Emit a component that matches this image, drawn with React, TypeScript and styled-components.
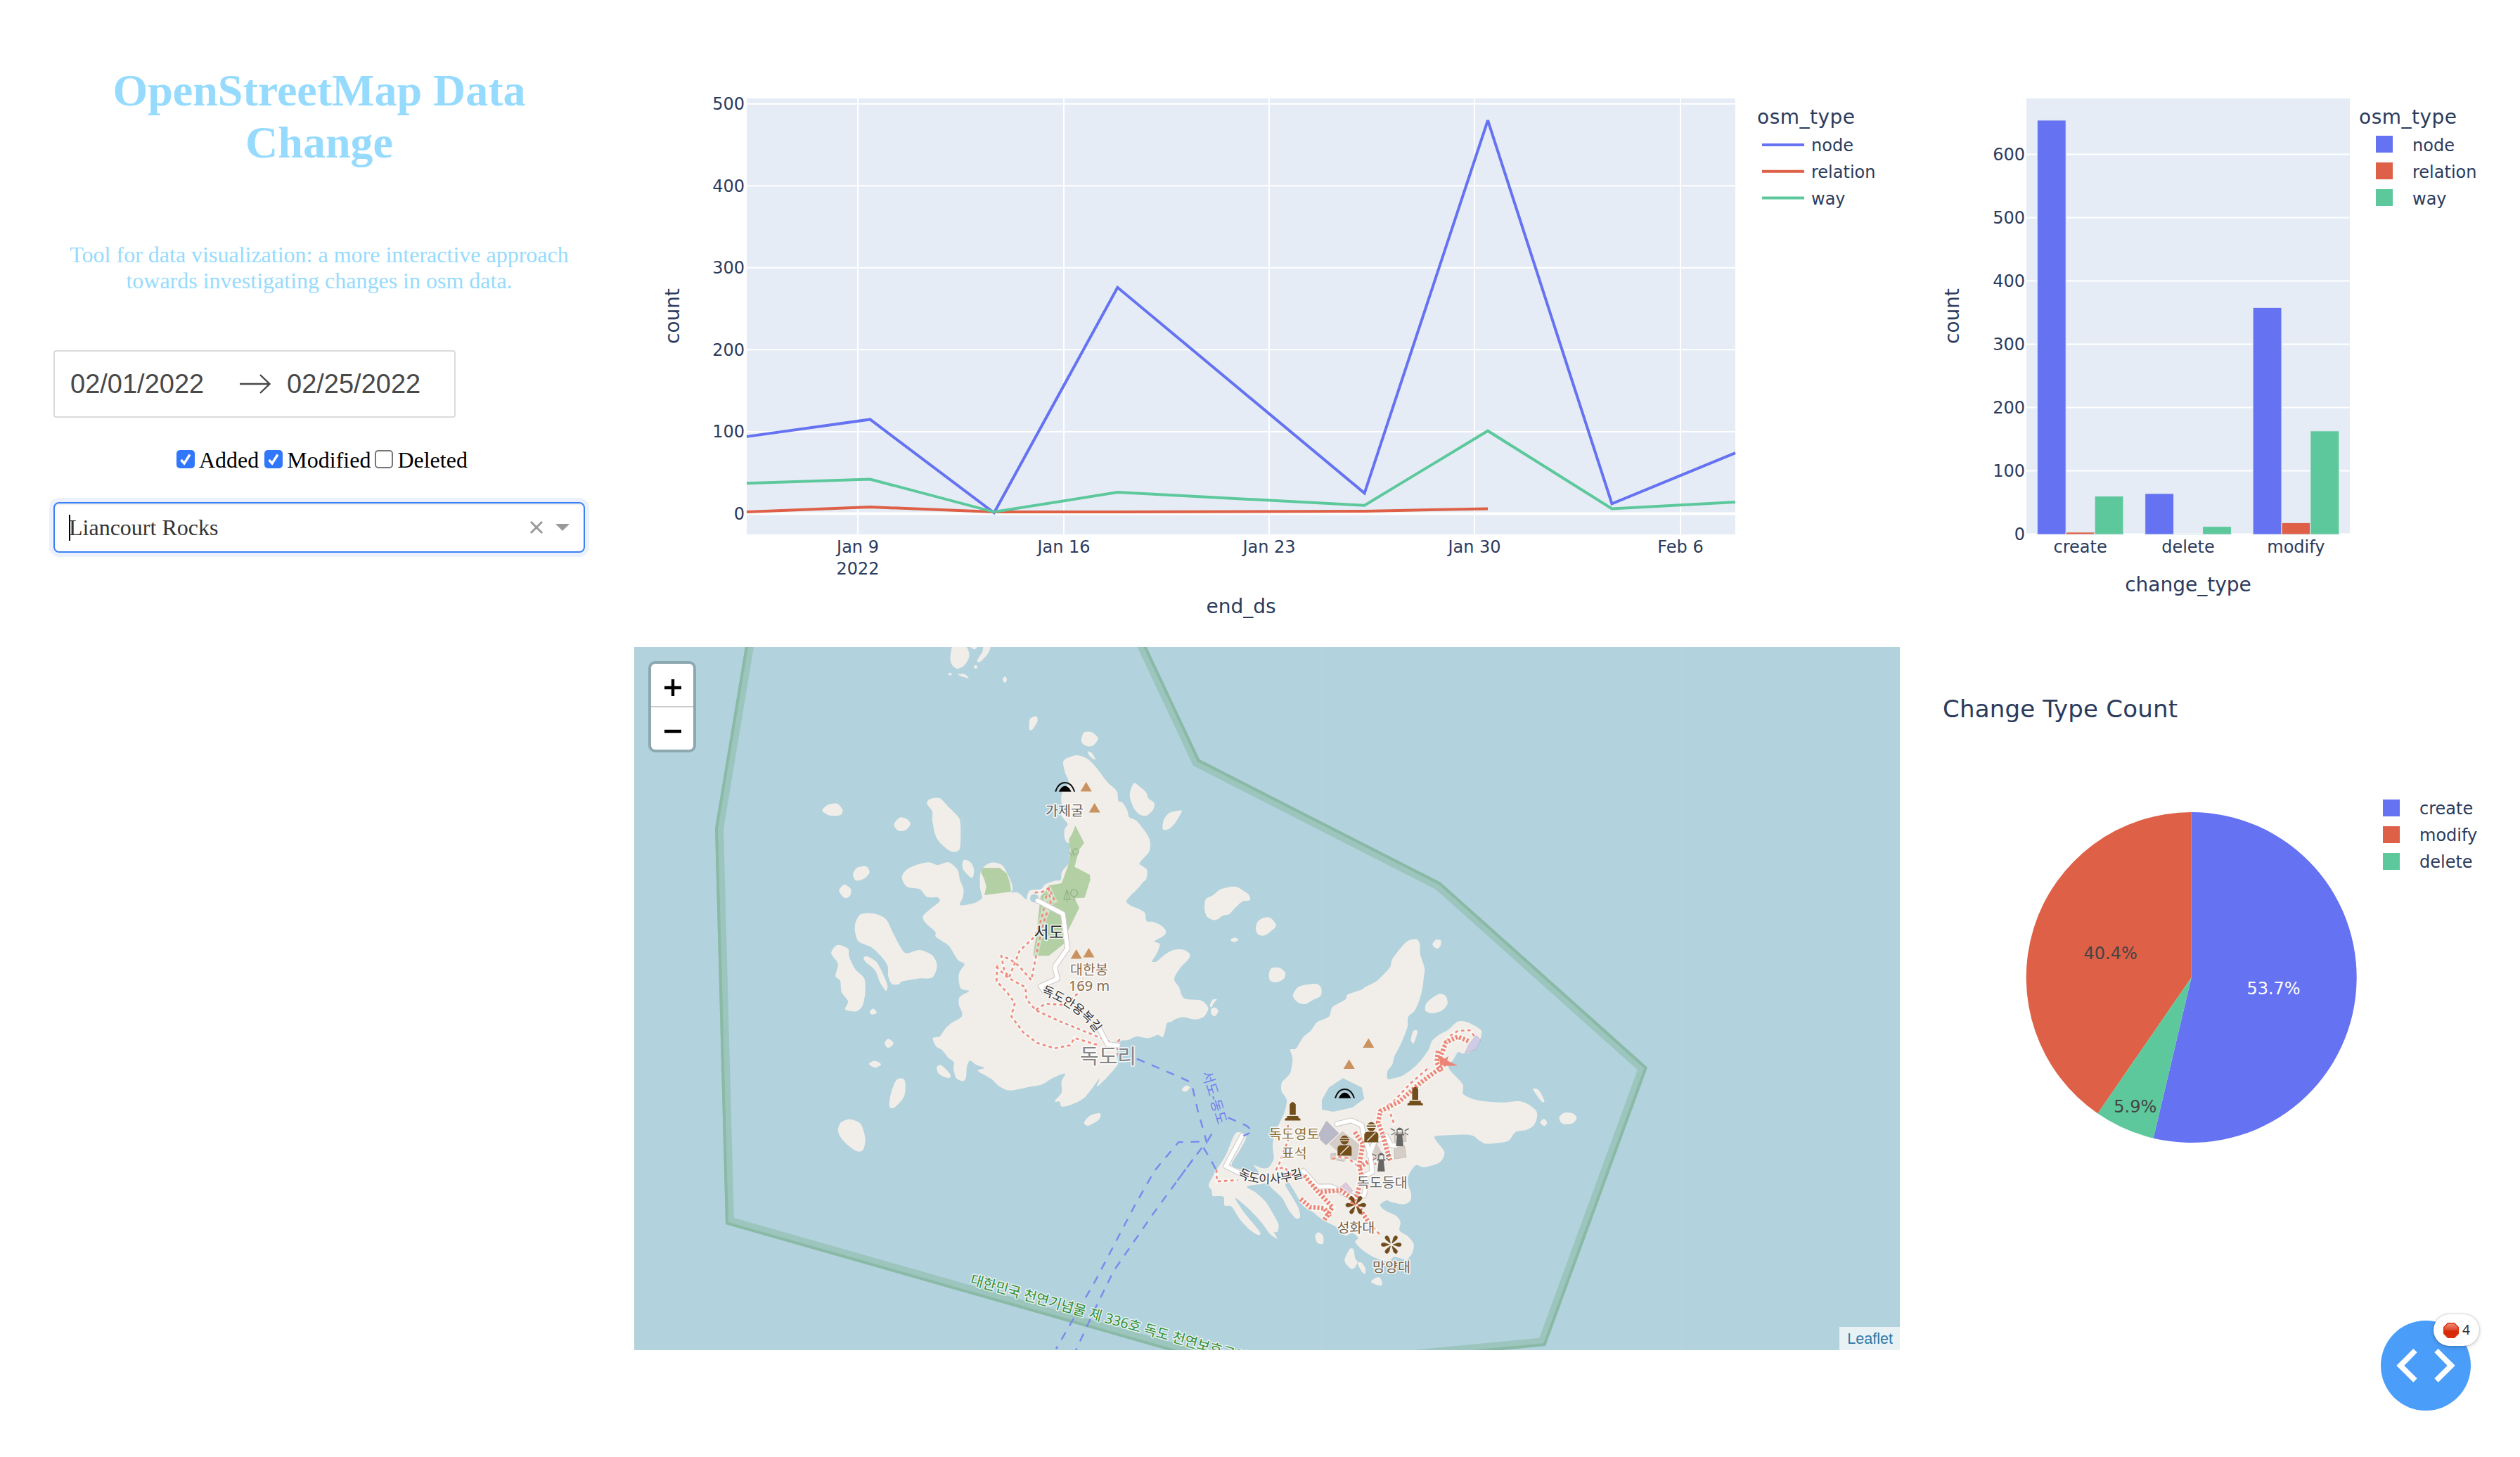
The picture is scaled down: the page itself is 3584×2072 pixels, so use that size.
import React from "react";
import styled, { createGlobalStyle } from "styled-components";

const BLUE = "#6572f1";
const RED = "#dd6047";
const GREEN = "#5cc89b";
const INK = "#2b3b5c";
const PLOT = "#e5ecf6";
const SANS = '"DejaVu Sans", Verdana, sans-serif';
const KOREAN = '"Noto Sans", "Noto Sans CJK KR", sans-serif';

const GlobalStyle = createGlobalStyle`
  body { margin: 0; background: #fff; }
`;

const Page = styled.main`
  display: grid;
  grid-template-columns: 902px 1800px 882px;
  grid-template-rows: 920px 1000px;
  width: 3584px;
  height: 2072px;
  overflow: hidden;
  font-family: "Liberation Serif", "Times New Roman", serif;
`;

const Sidebar = styled.aside`
  grid-row: 1 / span 2;
  box-sizing: border-box;
  padding: 92px 70px 0 76px;
  display: flex;
  flex-direction: column;
`;

const Title = styled.h1`
  margin: 0;
  font-size: 64px;
  line-height: 74px;
  font-weight: 700;
  text-align: center;
  color: #96dbfd;
`;

const Subtitle = styled.p`
  margin: 104px 0 0;
  font-size: 32px;
  line-height: 37px;
  text-align: center;
  color: #96dbfd;
`;

const DateRange = styled.div`
  box-sizing: border-box;
  margin-top: 80px;
  width: 572px;
  height: 96px;
  border: 2px solid #dbdbdb;
  border-radius: 4px;
  display: flex;
  align-items: center;
  padding-left: 22px;
`;

const DateText = styled.span<{ $width: number }>`
  width: ${(p) => p.$width}px;
  font-family: "Liberation Sans", Arial, sans-serif;
  font-size: 38px;
  line-height: 44px;
  color: #484848;
`;

const DateArrow = styled.svg`
  width: 46px;
  height: 30px;
  margin-right: 22px;
`;

const Checks = styled.div`
  display: flex;
  align-items: flex-start;
  margin-top: 42px;
  padding-left: 175px;
  height: 37px;
`;

const CheckItem = styled.label<{ $gap: number }>`
  display: flex;
  align-items: flex-start;
  gap: 6px;
  margin-right: ${(p) => p.$gap}px;
  font-size: 32px;
  line-height: 37px;
  color: #000;
`;

const Box = styled.span<{ $on: boolean }>`
  box-sizing: border-box;
  width: 26px;
  height: 26px;
  margin-top: 4px;
  border-radius: 5px;
  border: 2px solid ${(p) => (p.$on ? "#3177fb" : "#767676")};
  background: ${(p) => (p.$on ? "#3177fb" : "#fff")};
  display: flex;
`;

const Select = styled.div`
  box-sizing: border-box;
  margin-top: 41px;
  height: 72px;
  border: 2px solid #3a80f4;
  border-radius: 8px;
  box-shadow: inset 0 2px 2px rgba(0, 0, 0, 0.075), 0 0 0 6px rgba(58, 128, 244, 0.1);
  display: flex;
  align-items: center;
  padding: 0 20px;
`;

const Caret = styled.span`
  width: 2px;
  height: 37px;
  background: #000;
  margin-right: -2px;
`;

const SelectValue = styled.span`
  flex: 1;
  font-size: 32px;
  line-height: 37px;
  color: #333;
`;

const SelectIcons = styled.svg`
  width: 58px;
  height: 20px;
`;

const ChartSvg = styled.svg`
  display: block;
  width: 100%;
  height: 100%;
  font-family: ${SANS};
  fill: ${INK};
`;

const MapFrame = styled.section`
  position: relative;
  overflow: hidden;
  background: #b2d2dd;
`;

const MapSvg = styled.svg`
  display: block;
  width: 1800px;
  height: 1000px;
  font-family: ${KOREAN};
`;

const ZoomControl = styled.div`
  position: absolute;
  left: 20px;
  top: 20px;
  border: 4px solid rgba(0, 0, 0, 0.2);
  border-radius: 10px;
  background-clip: padding-box;
  overflow: hidden;
`;

const ZoomButton = styled.button<{ $divider?: boolean }>`
  display: flex;
  align-items: center;
  justify-content: center;
  box-sizing: border-box;
  width: 60px;
  height: ${(p) => (p.$divider ? 62 : 60)}px;
  padding: 8px 0 0 2px;
  border: 0;
  border-bottom: ${(p) => (p.$divider ? "2px solid #ccc" : "0")};
  background: #fff;
`;

const Attribution = styled.div`
  position: absolute;
  right: 0;
  bottom: 0;
  height: 33px;
  padding: 0 10px 0 11px;
  background: rgba(255, 255, 255, 0.7);
  font: 21.6px/33px "Liberation Sans", Arial, sans-serif;
  color: #2f77a6;
`;

const DebugButton = styled.div`
  position: absolute;
  left: 3386px;
  top: 1878px;
  width: 128px;
  height: 128px;
  border-radius: 50%;
  background: #4a9df9;
`;

const Badge = styled.div`
  position: absolute;
  left: 75px;
  top: -9px;
  width: 65px;
  height: 45px;
  border-radius: 23px;
  background: #fff;
  box-shadow: 0 0 3px rgba(0, 0, 0, 0.25), 0 2px 6px rgba(0, 0, 0, 0.16);
  display: flex;
  align-items: center;
  gap: 5px;
  padding-left: 14px;
  box-sizing: border-box;
  font: 19px/45px "Noto Sans", sans-serif;
  color: #333;
`;

/* ---------- charts ---------- */

const lineX = [1062, 1237.5, 1413.8, 1589.4, 1940.6, 2116, 2292.5, 2468];
const series = [
  { name: "node", color: BLUE, values: [94, 115, 1, 276, 25, 480, 12, 74] },
  { name: "relation", color: RED, values: [2, 8, 2, 2, 3, 6] },
  { name: "way", color: GREEN, values: [37, 42, 2, 26, 10, 101, 6, 14] },
];
const lineY = (v: number) => 730.4 - v * 1.1652;

const weeks = [
  { label: "Jan 9", x: 1220 },
  { label: "Jan 16", x: 1513 },
  { label: "Jan 23", x: 1805 },
  { label: "Jan 30", x: 2097 },
  { label: "Feb 6", x: 2390 },
];

function LineChart() {
  return (
    <ChartSvg viewBox="902 0 1800 920">
      <rect x={1062} y={140} width={1406} height={620} fill={PLOT} />
      {weeks.map((w) => (
        <line key={w.label} x1={w.x} x2={w.x} y1={140} y2={760} stroke="#fff" strokeWidth={2} />
      ))}
      {[0, 100, 200, 300, 400, 500].map((v) => (
        <g key={v}>
          <line x1={1062} x2={2468} y1={lineY(v)} y2={lineY(v)} stroke="#fff" strokeWidth={v ? 2 : 4} />
          <text x={1059} y={lineY(v) + 8.5} fontSize={24} textAnchor="end">{v}</text>
        </g>
      ))}
      {series.map((s) => (
        <polyline
          key={s.name}
          points={s.values.map((v, i) => `${lineX[i]},${lineY(v)}`).join(" ")}
          fill="none"
          stroke={s.color}
          strokeWidth={4}
          strokeMiterlimit={2}
        />
      ))}
      {weeks.map((w) => (
        <text key={w.label} x={w.x} y={786} fontSize={24} textAnchor="middle">{w.label}</text>
      ))}
      <text x={1220} y={816.5} fontSize={24} textAnchor="middle">2022</text>
      <text x={1765} y={872} fontSize={28} textAnchor="middle">end_ds</text>
      <text transform="translate(966 449.5) rotate(-90)" fontSize={28} textAnchor="middle">count</text>
      <text x={2499} y={176} fontSize={28} textLength={139}>osm_type</text>
      {series.map((s, i) => (
        <g key={s.name}>
          <line x1={2506} x2={2566} y1={206 + i * 37.7} y2={206 + i * 37.7} stroke={s.color} strokeWidth={4} />
          <text x={2576} y={214.5 + i * 38} fontSize={24}>{s.name}</text>
        </g>
      ))}
    </ChartSvg>
  );
}

const groups = [
  { name: "create", values: [654, 3, 60] },
  { name: "delete", values: [64, 0, 12] },
  { name: "modify", values: [358, 18, 163] },
];

function BarChart() {
  const y = (v: number) => 759.5 - v * 0.9;
  return (
    <ChartSvg viewBox="2702 0 882 920">
      <rect x={2882} y={140} width={460} height={620} fill={PLOT} />
      {[0, 100, 200, 300, 400, 500, 600].map((v) => (
        <g key={v}>
          <line x1={2882} x2={3342} y1={y(v)} y2={y(v)} stroke="#fff" strokeWidth={2} />
          <text x={2880} y={y(v) + 8.5} fontSize={24} textAnchor="end">{v}</text>
        </g>
      ))}
      {groups.map((g, i) =>
        g.values.map((v, j) => (
          <rect
            key={g.name + j}
            x={2897.3 + i * 153.4 + j * 40.9}
            y={y(v)}
            width={40.9}
            height={v * 0.9 + 0.5}
            fill={series[j].color}
            stroke={PLOT}
            strokeWidth={1}
          />
        ))
      )}
      {groups.map((g, i) => (
        <text key={g.name} x={2958.6 + i * 153.4} y={786} fontSize={24} textAnchor="middle">{g.name}</text>
      ))}
      <text x={3112} y={841} fontSize={28} textAnchor="middle">change_type</text>
      <text transform="translate(2786 449.5) rotate(-90)" fontSize={28} textAnchor="middle">count</text>
      <text x={3355} y={176} fontSize={28} textLength={139}>osm_type</text>
      {series.map((s, i) => (
        <g key={s.name}>
          <rect x={3379} y={193 + i * 38} width={24} height={24} fill={s.color} />
          <text x={3431} y={214.5 + i * 38} fontSize={24}>{s.name}</text>
        </g>
      ))}
    </ChartSvg>
  );
}

const slices = [
  { name: "create", share: 53.7, color: BLUE, from: 0, tx: 3233.5, ty: 1413.5, ink: "#fff" },
  { name: "modify", share: 40.4, color: RED, from: 59.6, tx: 3001.6, ty: 1364, ink: "#444" },
  { name: "delete", share: 5.9, color: GREEN, from: 53.7, tx: 3036.8, ty: 1581.5, ink: "#444" },
];

function PieChart() {
  const at = (pct: number) => {
    const a = (pct / 100) * Math.PI * 2;
    return `${3116.7 + 235 * Math.sin(a)},${1390 - 235 * Math.cos(a)}`;
  };
  return (
    <ChartSvg viewBox="2702 920 882 1000">
      <text x={2763} y={1020} fontSize={34} textLength={334}>Change Type Count</text>
      {slices.map((s, i) => (
        <g key={s.name}>
          <path
            d={`M3116.7,1390 L${at(s.from)} A235,235 0 ${s.share > 50 ? 1 : 0} 1 ${at(s.from + s.share)} Z`}
            fill={s.color}
          />
          <rect x={3389} y={1137 + i * 38} width={24} height={24} fill={s.color} />
          <text x={3441} y={1158 + i * 38} fontSize={24}>{s.name}</text>
        </g>
      ))}
      {slices.map((s) => (
        <text key={s.name} x={s.tx} y={s.ty} fontSize={24} textAnchor="middle" fill={s.ink}>{s.share}%</text>
      ))}
    </ChartSvg>
  );
}

/* ---------- map ---------- */

// Survey sheets: each has its own origin and its own units per map pixel.
const sheets: Record<string, [number, number, number, number]> = {
  A: [900, 910, 1.96, 1.5373],
  B: [1300, 1020, 3, 2.9037],
  C: [1660, 1300, 3, 2.8],
  D: [2100, 910, 2.529, 1.5373],
  E: [1700, 1500, 3, 3],
  M: [0, 0, 1, 1],
};

function project(src: string): [number, number][] {
  let sheet = sheets.M;
  const out: [number, number][] = [];
  src.trim().split(/\s+/).forEach((token) => {
    if (sheets[token]) {
      sheet = sheets[token];
      return;
    }
    const [x, y] = token.split(",").map(Number);
    out.push([sheet[0] + x / sheet[2], sheet[1] + y / sheet[3]]);
  });
  return out;
}

const straight = (src: string) => "M" + project(src).map((p) => p.map((n) => n.toFixed(1)).join(",")).join(" L");

function coast(src: string) {
  const p = project(src);
  const n = p.length;
  const t = 7;
  let d = `M${p[0].join(",")}`;
  for (let i = 0; i < n; i++) {
    const a = p[(i + n - 1) % n];
    const b = p[i];
    const c = p[(i + 1) % n];
    const e = p[(i + 2) % n];
    d += ` C${b[0] + (c[0] - a[0]) / t},${b[1] + (c[1] - a[1]) / t} ${c[0] - (e[0] - b[0]) / t},${c[1] - (e[1] - b[1]) / t} ${c[0]},${c[1]}`;
  }
  return d + "Z";
}

const land = [
  "B 636,185 655,168 695,157 740,172 775,205 825,268 865,305 872,345 890,353 910,385 918,412 950,428 985,470 1005,505 1008,535 1000,560 962,602 975,615 995,632 990,670 978,680 950,712 925,735 906,760 925,778 960,792 985,808 992,842 1020,845 1055,860 1075,883 1065,902 1025,925 1047,935 1045,955 1030,985 1015,1008 1035,1008 1070,980 1110,960 1150,960 C 97,160 90,180 55,215 30,258 50,290 72,335 140,342 165,358 175,378 160,405 135,417 110,418 65,410 30,420 20,428 0,433 B 1075,1275 1070,1300 1060,1322 1040,1312 1000,1325 950,1318 915,1332 885,1335 860,1340 870,1420 865,1440 820,1490 780,1525 A 1300,960 1260,1000 1222,1016 1195,1020 1190,1010 1176,1008 1195,990 1195,965 1205,948 1170,958 1140,972 1100,978 1050,985 1020,975 1000,960 962,942 B 300,1448 265,1435 238,1418 225,1445 222,1485 210,1502 180,1490 168,1450 170,1425 145,1405 120,1375 95,1360 80,1325 110,1318 130,1290 160,1262 200,1240 205,1220 192,1190 192,1160 210,1145 235,1130 200,1120 190,1080 195,1050 215,1020 190,1005 175,985 150,945 120,925 92,905 90,885 50,850 38,822 A 830,588 855,572 850,563 820,562 800,545 765,540 750,520 762,503 790,492 825,486 850,492 880,486 905,502 912,525 922,545 920,562 913,580 B 255,768 275,758 290,745 281,700 282,650 295,620 330,600 375,610 400,650 418,690 420,712 415,724 445,725 478,752 483,735 495,715 540,710 560,690 600,675 625,672 630,640 645,620 665,595 665,545 680,530 650,515 641,490 643,460 655,440 628,405 632,370 628,345 632,310 660,270 645,230",
  "C 1065,100 1078,120 1080,160 1098,215 1095,250 1088,300 1075,345 1055,385 1028,410 1025,450 1005,500 985,540 970,565 960,600 940,625 940,655 960,655 1000,645 1040,620 1080,585 1115,540 1130,505 1160,480 1200,460 1240,428 1280,430 1330,455 1342,470 1335,500 1320,530 1290,550 1260,555 1240,550 1220,580 1200,600 1205,620 1230,645 1262,680 1262,715 1300,735 1350,745 1430,750 1500,745 D 185,1015 215,1030 217,1045 205,1062 180,1071 140,1076 115,1095 75,1100 30,1101 0,1090 C 1310,885 1280,878 1200,880 1142,885 1150,905 1182,945 1175,975 1150,995 1095,1008 1060,1000 1030,1040 1028,1075 1040,1110 1038,1140 1010,1155 960,1148 935,1140 908,1158 930,1180 975,1200 995,1225 992,1260 1030,1285 1052,1315 1045,1350 1020,1375 970,1365 950,1380 920,1380 870,1360 830,1335 802,1305 815,1290 790,1270 760,1280 740,1255 700,1235 660,1215 620,1185 580,1160 540,1100 515,1065 505,1080 530,1120 560,1170 567,1205 550,1212 520,1180 490,1130 450,1095 430,1075 400,1075 340,1085 380,1110 420,1145 450,1190 475,1235 470,1265 455,1265 470,1292 440,1275 400,1225 350,1175 290,1130 330,1190 370,1235 398,1270 385,1277 350,1255 310,1215 275,1165 245,1160 240,1125 195,1122 190,1100 177,1078 200,1035 250,960 292,872 337,885 310,940 275,1000 330,1020 390,1030 370,1000 400,1010 430,1010 450,985 455,965 450,920 460,870 480,830 500,790 510,740 488,705 490,670 525,632 535,575 525,540 550,535 580,490 612,465 640,430 690,408 705,370 760,340 770,320 830,300 845,290 895,265 950,212 960,180 1000,130 1030,105",
  "A 528,373 545,360 570,358 585,372 578,383 550,384",
  "A 728,403 745,388 765,392 774,403 760,416 740,417",
  "A 820,358 828,348 855,346 880,365 905,385 913,400 912,455 890,463 865,450 845,430 835,395 835,375",
  "B 208,625 212,590 240,598 255,625 253,655 242,662",
  "A 614,512 625,498 650,495 660,508 645,522 622,526",
  "A 575,548 590,535 608,545 605,560 590,564",
  "A 620,620 635,600 670,598 705,610 725,640 745,670 762,685 800,678 835,690 848,712 835,738 800,740 750,747 742,753 722,752 712,735 710,712 690,690 665,672 630,660 620,640",
  "A 643,695 655,692 680,705 700,735 710,757 705,767 690,750 675,722 650,705",
  "A 553,685 570,667 600,675 603,692 620,720 645,740 648,770 640,800 622,812 592,808 600,790 582,770 578,745 565,735 572,708",
  "A 660,814 670,806 680,815 668,819",
  "A 702,882 712,872 727,882 712,892",
  "A 658,927 675,920 692,928 675,935",
  "A 715,1020 720,990 735,962 755,960 760,975 755,1000 730,1022",
  "A 572,1072 580,1055 605,1048 635,1058 648,1090 642,1115 625,1118 600,1105 580,1088",
  "A 847,935 860,930 885,950 880,958 855,950",
  "A 1258,1055 1275,1040 1302,1035 1300,1048 1270,1062",
  "C 62,700 80,683 97,690 80,707",
  "A 885,40 890,15 905,5 930,15 938,35 925,55 905,63 890,55",
  "A 935,8 962,8 955,20 945,18",
  "A 960,45 975,25 978,8 997,12 990,30 968,48",
  "A 950,59 956,55 961,59 956,63",
  "A 879,75 884,72 890,75 884,78",
  "A 905,75 925,75 936,84 918,80",
  "A 1031,87 1037,80 1043,87 1037,94",
  "A 1105,185 1108,172 1125,167 1128,178 1115,195 1106,197",
  "A 1250,218 1258,202 1280,202 1297,215 1285,230 1270,233 1255,228",
  "A 1268,244 1280,248 1290,262 1275,255",
  "B 920,320 938,272 965,288 990,310 1000,335 1025,355 1018,385 990,407 960,400 935,370",
  "B 1062,463 1065,425 1090,395 1140,385 1138,398 1115,435 1090,460",
  "C 159,-25 165,-60 195,-75 230,-100 290,-110 330,-90 350,-75 352,-55 320,-50 290,-25 265,0 240,5 205,24 170,10",
  "C 378,60 385,32 410,15 440,15 465,45 440,70 415,85 390,82",
  "C 270,103 288,94 304,102 285,111",
  "C 434,240 445,215 480,214 503,232 500,255 470,271 440,265",
  "C 537,320 560,290 600,280 640,278 657,295 655,325 620,343 590,358 565,355 545,340",
  "C 1132,122 1145,103 1168,105 1165,128 1150,137",
  "C 1100,375 1110,350 1160,318 1190,328 1195,360 1170,385 1130,395 1105,388",
  "C 183,360 195,340 212,340 200,352 188,372",
  "C 187,380 203,372 218,385 205,406 190,400",
  "C 1040,500 1050,465 1068,465 1062,490 1050,515",
  "C 632,1280 645,1267 665,1280 665,1312 640,1308",
  "C 757,1375 778,1335 795,1335 802,1370 812,1385 800,1408 785,1412 765,1395",
  "C 812,1390 830,1388 845,1410 845,1432 832,1425",
  "C 870,1462 900,1445 915,1460 915,1478 890,1475",
  "D 203,982 225,985 244,1008 232,1008",
  "D 229,1055 242,1047 254,1055 244,1063",
  "D 297,1045 315,1034 345,1035 360,1045 345,1057 310,1058",
];

const woods = [
  "B 286,640 290,622 365,622 395,645 408,680 415,720 300,735 308,700 300,670",
  "B 688,447 726,520 705,545 685,618 750,650 752,670 728,745 685,748 705,787 655,885 640,935 575,985 508,985 520,905 540,740 575,695 630,685 665,590 668,545 660,505 675,480",
];

const buildings: [string, string][] = [
  ["E 560,283 612,335 558,385 520,350", "#bab9ca"],
  ["E 628,328 700,385 690,450 640,440 573,380", "#d6cdc7"],
  ["E 578,422 600,420 600,440 640,445 635,455 578,445", "#d6cdc7"],
  ["E 848,395 893,390 900,437 850,445", "#d6cdc7"],
  ["E 848,330 897,330 900,370 850,372", "#d6cdc7"],
  ["E 770,375 795,420 780,450 755,420", "#d6cdc7"],
  ["E 643,545 672,580 655,597 612,570", "#dccbdc"],
  ["C 1318,483 1338,500 1315,540 1270,553 1290,515", "#cfcbe8"],
];

const footpaths = [
  "B 515,724 545,722 575,705 605,768",
  "B 575,705 583,770 558,830 530,940 500,1085 445,1025 410,1000 372,985 385,1045 405,1075 432,1010 450,965 515,905 545,830 565,735",
  "B 355,1025 352,1090 400,1140 430,1180 415,1235 465,1300 525,1345 600,1367 665,1355 685,1325 780,1352",
  "B 350,1030 400,1075 475,1115 480,1165 520,1210 620,1255 780,1318 850,1345",
  "B 520,1208 560,1183 640,1188 700,1140 722,1080",
  "B 825,1340 862,1352 880,1325",
  "B 868,1360 868,1395",
  "E 990,60 920,120 850,195 820,215 850,300",
  "E 395,300 395,365 360,460 345,490 380,480 415,520",
  "E 585,445 610,435 650,440 700,480",
  "C 1310,485 1290,462 1240,465 1200,490 1160,560",
  "E 90,490 92,540 180,535",
  "E 750,410 770,470",
  "E 740,715 785,765",
];

const steps = [
  "C 1285,505 1240,488 1190,510 1165,570 1180,600 E 1020,75 960,120 870,200 790,240 780,290 800,340 815,400 832,450",
  "C 1155,545 1150,590 1170,625",
  "E 680,330 715,380 700,470 710,520 690,600 665,640",
  "E 700,480 740,455",
  "E 465,515 520,580 585,650 550,705",
  "E 450,615 490,650 550,655 575,690",
  "E 535,585 620,578 650,600 690,640 740,715",
];

const roads = [
  "B 527,757 635,812 655,955 600,1030 612,1080 540,1110 555,1130",
  "B 790,1285 825,1350 870,1355",
  "E 200,345 130,475 200,510",
  "E 460,495 520,562 580,562 640,595 685,608 720,600 730,555 725,515 755,500 748,430 738,400 720,350 710,300 665,280 605,295",
  "E 742,430 765,370 815,348 835,385 855,388",
];

const ferries = [
  "B 950,1410 1060,1455 1170,1502 C 108,690 130,780 150,845 170,915",
  "C 260,810 340,843 365,866 325,883",
  "C 190,875 165,915",
  "C 137,906 50,908 A 1520,1099 1455,1160 1400,1235 1290,1400 1180,1550",
  "C 148,930 40,1065 A 1560,1137 1450,1255 1340,1380 1290,1460 1235,1553",
  "C 155,930 190,985 210,1020",
];

const reserve = "M 1064,895 1017,1178 1032,1741 1369,1837 1780,1954 2198,1914 2343,1518 2049,1255 1706,1080 1619,895";

const Label = ({ x, y, size, color, children }: { x: number; y: number; size: number; color: string; children: React.ReactNode }) => (
  <text x={x} y={y} fontSize={size} textAnchor="middle" fill={color} stroke="rgba(255,255,255,0.75)" strokeWidth={3.5} paintOrder="stroke" strokeLinejoin="round">
    {children}
  </text>
);

const peaks = [[1544.7, 1119], [1556.7, 1149], [1530.7, 1357], [1548.5, 1355], [1946.3, 1483.6], [1918.7, 1513.5]];

function IslandMap() {
  return (
    <MapFrame>
      <MapSvg viewBox="902 920 1800 1000">
        <defs>
          <clipPath id="reserve"><path d={straight(reserve) + "Z"} /></clipPath>
          <path id="west-road" d="M1481,1413 C1508,1424 1538,1440 1559,1470" />
          <path id="east-road" d="M1760,1672 C1785,1690 1830,1683 1860,1671" />
          <path id="reserve-name" d="M1379,1826 L1660,1906 L1860,1963" />
        </defs>
        {[1368.4, 1880, 2392].map((x) => (
          <line key={x} x1={x} x2={x} y1={920} y2={1920} stroke="#bad6df" strokeWidth={1} />
        ))}
        {land.map((s, i) => <path key={i} d={coast(s)} fill="#f1eee9" />)}
        <path d={straight("C 660,740 690,690 750,653 830,690 841,735 790,770 708,787 660,778") + "Z"} fill="#b2d2dd" />
        <circle cx={1471} cy={1277.5} r={6} fill="#b2d2dd" />
        {woods.map((s) => <path key={s} d={straight(s) + "Z"} fill="#b3cfa4" />)}
        <g fill="none" stroke="#95b58b" strokeWidth={1.3}>
          <path d="M1517.5,1283 V1265 L1513,1279 H1522 L1517.5,1265" />
          <path d="M1527.5,1281 V1275" />
          <circle cx={1527.5} cy={1270} r={5} />
          <path d="M1524,1208 l4,10 M1521,1212 l4,6" />
          <circle cx={1530} cy={1211} r={4} />
        </g>
        <g clipPath="url(#reserve)" fill="none" strokeLinejoin="miter">
          <path d={straight(reserve) + "Z"} stroke="#9cc5bd" strokeWidth={24} />
          <path d={straight(reserve) + "Z"} stroke="#8ab9a6" strokeWidth={8} />
        </g>
        {buildings.map(([s, c]) => <path key={s} d={straight(s) + "Z"} fill={c} stroke="rgba(120,100,90,0.22)" />)}
        <g fill="none" strokeLinejoin="round">
          {footpaths.map((s) => <path key={s} d={straight(s)} stroke="rgba(255,255,255,0.4)" strokeWidth={6} />)}
          {footpaths.map((s) => <path key={s} d={straight(s)} stroke="#ee8a7d" strokeWidth={2.6} strokeDasharray="4.5 4.5" />)}
          {steps.map((s) => <path key={s} d={straight(s)} stroke="rgba(255,255,255,0.5)" strokeWidth={10} />)}
          {roads.map((s) => <path key={s} d={straight(s)} stroke="#cfcbc8" strokeWidth={8} strokeLinecap="round" />)}
          {roads.map((s) => <path key={s} d={straight(s)} stroke="#fff" strokeWidth={5.8} strokeLinecap="round" />)}
          {steps.map((s) => <path key={s} d={straight(s)} stroke="#ec8576" strokeWidth={6.5} strokeDasharray="3 2.6" />)}
          {ferries.map((s) => <path key={s} d={straight(s)} stroke="#7b88ee" strokeWidth={2.4} strokeDasharray="12 11" />)}
        </g>
        <path d={straight("C 1160,565 1185,575 1200,565 1195,583 1240,603 1185,604 1165,600") + "Z"} fill="#ec8576" />

        {peaks.map(([x, y]) => <path key={x} d={`M${x},${y - 7} l8,13.5 h-16 Z`} fill="#c9925f" />)}
        {[[1514.7, 1125.7], [1912.5, 1561.8]].map(([x, y]) => (
          <g key={x} transform={`translate(${x} ${y})`}>
            <path d="M-13.5,0 C-8,-17 8,-17 13.5,0" fill="none" stroke="#111" strokeWidth={2} />
            <path d="M-9,0 Q-5,-8 0,-8 Q5,-8 9,0 Z" fill="#000" />
          </g>
        ))}
        {[[1838.5, 1566.5], [2012.7, 1545]].map(([x, y]) => (
          <path key={x} transform={`translate(${x} ${y})`} d="M-4.3,19 V4 Q0,-3 4.3,4 V19 Z M-8,20.5 H8 V23 L11,24.5 V27 H-11 V24.5 L-8,23 Z" fill="#724e1b" />
        ))}
        {[[1912.3, 1614.5], [1950.3, 1595.5]].map(([x, y]) => (
          <g key={x} transform={`translate(${x} ${y})`}>
            <path d="M-5.5,3.5 Q0,-3 5.5,3.5 Z M-6.5,5 H6.5 V7 H-6.5 Z M-6,8.5 H6 Q4,13 0,13 Q-4,13 -6,8.5 Z" fill="#724e1b" />
            <path d="M-10,29 V18 Q-9,14 -5,14 H6 Q10,15 10,19 V29 Z" fill="#724e1b" />
            <path d="M-6,27 L6,15" stroke="#e8dfd2" strokeWidth={1.6} />
          </g>
        ))}
        {[[1990.7, 1603], [1964.3, 1639]].map(([x, y]) => (
          <g key={x} transform={`translate(${x} ${y})`} fill="#666" stroke="#777">
            <path d="M-5,4 Q0,-3 5,4 Z M-3.5,11 H3.5 L5.3,27 H-5.3 Z M-6,9.5 H6 V11.5 H-6 Z" stroke="none" />
            <path d="M-3.7,4 V10 M3.7,4 V10 M-7,5 L-13,2 M-7,8 L-12,11 M7,5 L13,2 M7,8 L12,11" strokeWidth={1.4} fill="none" />
          </g>
        ))}
        {[[1928.3, 1713.7], [1978.7, 1770]].map(([x, y]) => (
          <g key={x} transform={`translate(${x} ${y})`} fill="#6f4c1a">
            {[0, 58, 122, 180, 238, 302].map((a) => (
              <path key={a} transform={`rotate(${a})`} d="M2.5,0 L10,-2.6 Q14.3,-2.8 14.3,0 Q14.3,2.8 10,2.6 Z" stroke="#6f4c1a" strokeWidth={0.7} />
            ))}
          </g>
        ))}

        <Label x={1514} y={1160} size={19.5} color="#5f5f5f">가제굴</Label>
        <Label x={1491.7} y={1333.5} size={23} color="#2a2a2a">서도</Label>
        <Label x={1549} y={1386} size={19.5} color="#8a6a49">대한봉</Label>
        <Label x={1549} y={1409} size={20} color="#8a6a49">169 m</Label>
        <Label x={1576} y={1512.5} size={29} color="#858585">독도리</Label>
        <Label x={1840.7} y={1620} size={19.5} color="#8d6f35">독도영토</Label>
        <Label x={1840.7} y={1646.5} size={19.5} color="#8d6f35">표석</Label>
        <Label x={1965.7} y={1689} size={19.5} color="#666">독도등대</Label>
        <Label x={1928.3} y={1752.5} size={19.5} color="#7d6042">성화대</Label>
        <Label x={1979} y={1809} size={19.5} color="#7d6042">망양대</Label>
        <g stroke="rgba(255,255,255,0.7)" strokeWidth={3} paintOrder="stroke" strokeLinejoin="round">
          <text fontSize={17.5} fill="#333"><textPath href="#west-road">독도안용복길</textPath></text>
          <text fontSize={17.5} fill="#333"><textPath href="#east-road">독도이사부길</textPath></text>
          <text fontSize={19.9} fill="#35902f"><textPath href="#reserve-name">대한민국 천연기념물 제 336호 독도 천연보호구역</textPath></text>
        </g>
        <text transform="translate(1714 1524) rotate(73)" y={5} fontSize={19.5} fill="#7380ee">서도-동도</text>
      </MapSvg>
      <ZoomControl>
        <ZoomButton $divider aria-label="Zoom in">
          <svg width="24" height="24" viewBox="0 0 24 24"><path d="M0,12 H24 M12,0 V24" stroke="#000" strokeWidth="4.4" /></svg>
        </ZoomButton>
        <ZoomButton aria-label="Zoom out">
          <svg width="24" height="24" viewBox="0 0 24 24"><path d="M0,12 H24" stroke="#000" strokeWidth="4.4" /></svg>
        </ZoomButton>
      </ZoomControl>
      <Attribution>Leaflet</Attribution>
    </MapFrame>
  );
}

const options = [
  { label: "Added", on: true, gap: 8 },
  { label: "Modified", on: true, gap: 6 },
  { label: "Deleted", on: false, gap: 0 },
];

export default function App() {
  return (
    <>
      <GlobalStyle />
      <Page>
        <Sidebar>
          <Title>OpenStreetMap Data Change</Title>
          <Subtitle>
            Tool for data visualization: a more interactive approach towards investigating changes in osm data.
          </Subtitle>
          <DateRange>
            <DateText $width={240}>02/01/2022</DateText>
            <DateArrow viewBox="0 0 46 30">
              <path d="M1,15 H43 M30,2 L43.5,15 L30,28" fill="none" stroke="#484848" strokeWidth="2.4" />
            </DateArrow>
            <DateText $width={200}>02/25/2022</DateText>
          </DateRange>
          <Checks>
            {options.map((o) => (
              <CheckItem key={o.label} $gap={o.gap}>
                <Box $on={o.on}>
                  {o.on && (
                    <svg width="22" height="22" viewBox="0 0 22 22">
                      <path d="M4.5,12 L9,17 L17,4.5" fill="none" stroke="#fff" strokeWidth="3.4" />
                    </svg>
                  )}
                </Box>
                {o.label}
              </CheckItem>
            ))}
          </Checks>
          <Select>
            <Caret />
            <SelectValue>Liancourt Rocks</SelectValue>
            <SelectIcons viewBox="0 0 58 20">
              <path d="M3,2 L19,18 M19,2 L3,18" stroke="#999" strokeWidth="3" />
              <path d="M38,5 H58 L48,15 Z" fill="#999" />
            </SelectIcons>
          </Select>
        </Sidebar>
        <LineChart />
        <BarChart />
        <IslandMap />
        <PieChart />
      </Page>
      <DebugButton>
        <svg width="128" height="128" viewBox="0 0 128 128">
          <path d="M22.3,64 L46.3,40 L51.7,45.3 L33.3,64 L51.7,82.3 L46.3,87.7 Z M105.7,64 L81.7,40 L76.3,45.3 L94.7,64 L76.3,82.3 L81.7,87.7 Z" fill="#fff" />
        </svg>
        <Badge>
          <svg width="22" height="22" viewBox="0 0 22 22">
            <defs>
              <linearGradient id="stop" x1="0" y1="0" x2="0" y2="1">
                <stop offset="0" stopColor="#f0907c" />
                <stop offset="0.45" stopColor="#e0482c" />
                <stop offset="0.55" stopColor="#d42a08" />
                <stop offset="1" stopColor="#dd2a08" />
              </linearGradient>
            </defs>
            <path d="M6.5,0.7 H15.5 L21.3,6.5 V15.5 L15.5,21.3 H6.5 L0.7,15.5 V6.5 Z" fill="url(#stop)" stroke="#d8330f" strokeWidth="1.4" />
          </svg>
          4
        </Badge>
      </DebugButton>
    </>
  );
}
